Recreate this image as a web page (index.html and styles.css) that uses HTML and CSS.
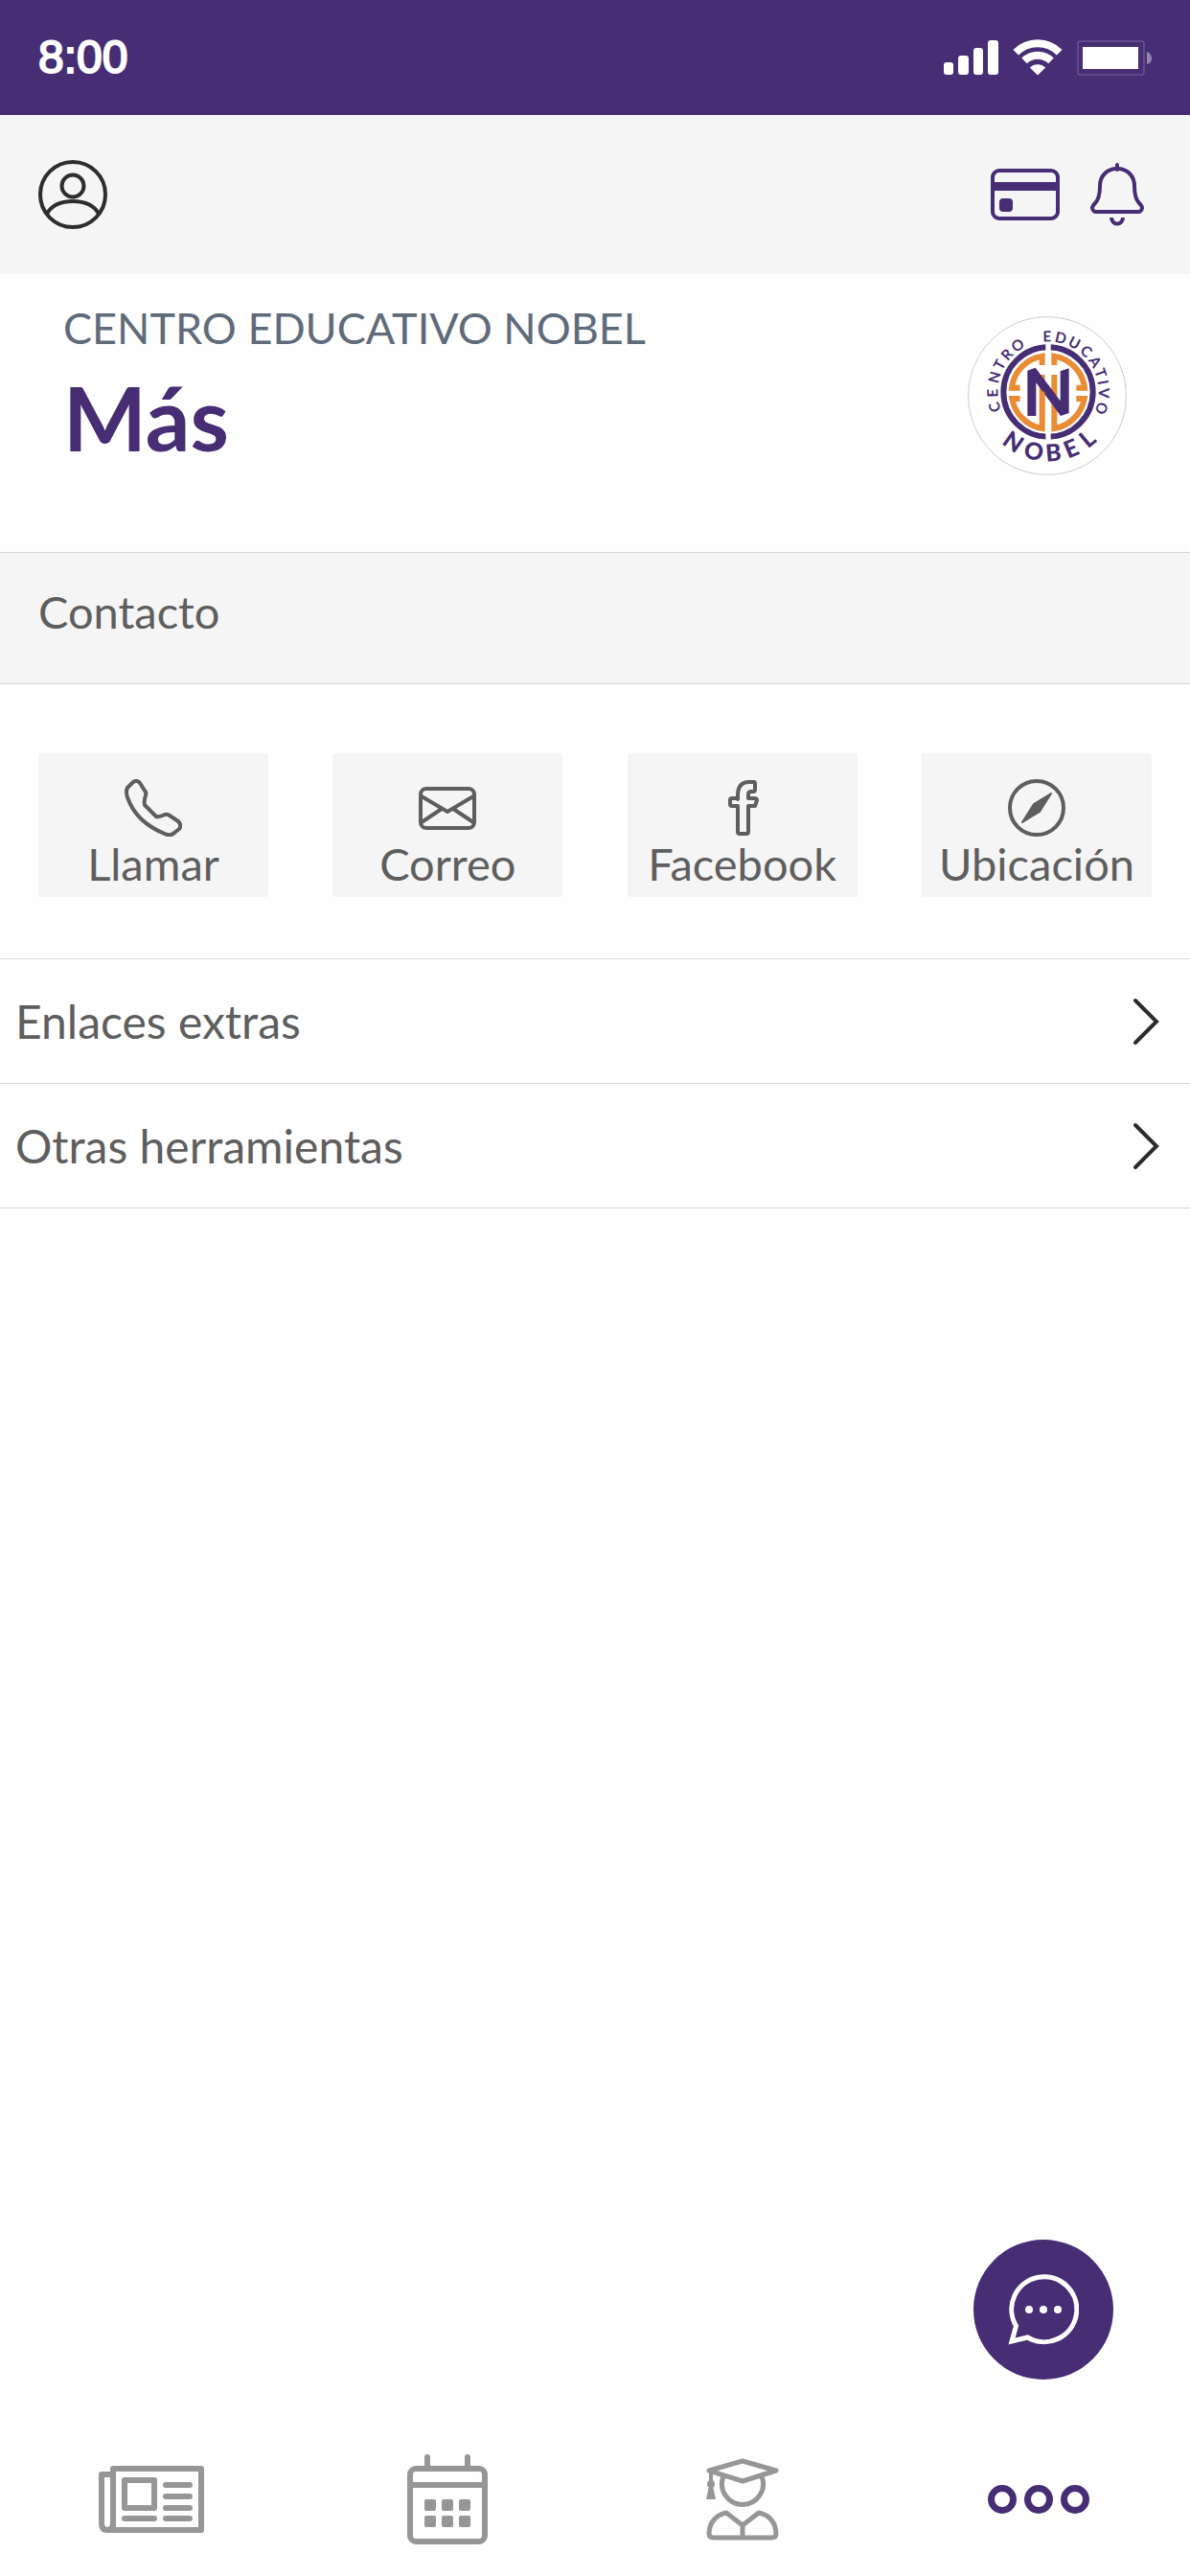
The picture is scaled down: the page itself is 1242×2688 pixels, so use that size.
FILE: index.html
```html
<!DOCTYPE html>
<html lang="es">
<head>
    <meta charset="UTF-8">
    <meta name="viewport" content="width=device-width, initial-scale=1.0">
    <title>Centro Educativo Nobel - Más</title>
    <link rel="stylesheet" href="styles.css">
</head>
<body>
    <div class="status-bar">
        <span class="status-time">8:00</span>
        <div class="status-icons">
            <svg width="57" height="36" viewBox="0 0 57 36" fill="#fff">
                <rect x="0" y="23" width="10" height="13" rx="3"/>
                <rect x="15" y="16" width="11" height="20" rx="3"/>
                <rect x="31" y="8" width="10" height="28" rx="3"/>
                <rect x="46" y="0" width="11" height="36" rx="3"/>
            </svg>
            <svg width="52" height="38" viewBox="0 0 52 38" fill="none" stroke="#fff" stroke-width="8">
                <path d="M3.3 13.8A32 32 0 0 1 48.700 13.800"/>
                <path d="M12 22.400A20 20 0 0 1 40 22.400"/>
                <path d="M26 37.500 17.800 29.600A11.500 11.500 0 0 1 34.200 29.600Z" fill="#fff" stroke="none"/>
            </svg>
            <svg width="78" height="37" viewBox="0 0 78 37">
                <rect x="1" y="1" width="69" height="35" rx="2" fill="none" stroke="#7c69a0"/>
                <rect x="6" y="7" width="58" height="23" fill="#fff"/>
                <path d="M73 12q5 2 5 7t-5 6z" fill="#9486b2"/>
            </svg>
        </div>
    </div>

    <header class="top-bar">
        <button type="button" class="icon-button" aria-label="Perfil">
            <svg width="72" height="72" viewBox="0 0 72 72" fill="none" stroke="#2d2d2d" stroke-width="4">
                <circle cx="36" cy="36" r="34"/>
                <circle cx="36" cy="27" r="11.500"/>
                <path d="M9 56C14 47 24 43 36 43s22 4 27 13"/>
            </svg>
        </button>
        <div class="top-actions">
            <button type="button" class="icon-button" aria-label="Pagos">
                <svg width="72" height="54" viewBox="0 0 72 54" fill="#462d74">
                    <rect x="2" y="2" width="68" height="50" rx="7" fill="none" stroke="#462d74" stroke-width="4"/>
                    <rect x="2" y="14" width="68" height="9"/>
                    <rect x="9" y="31" width="14" height="14" rx="4"/>
                </svg>
            </button>
            <button type="button" class="icon-button" aria-label="Notificaciones">
                <svg width="56" height="66" viewBox="0 0 56 66" fill="none" stroke="#462d74" stroke-width="4">
                    <path d="M28 2v5" stroke-linecap="round"/>
                    <path d="M28 6C17 6 10 14 10 24c0 8-1 14-5 18-2 2-3 3-3 5 0 2 2 4 4 4h44c2 0 4-2 4-4 0-2-1-3-3-5-4-4-5-10-5-18C46 14 39 6 28 6z"/>
                    <path d="M22 57a6 6.500 0 0 0 12 0"/>
                </svg>
            </button>
        </div>
    </header>

    <section class="hero">
        <div>
            <p class="school-name">CENTRO EDUCATIVO NOBEL</p>
            <h1 class="page-title">Más</h1>
        </div>
        <svg class="school-logo" viewBox="58 60 498 498">
            <circle cx="307" cy="309" r="247" fill="#fff" stroke="#ccc" stroke-width="3"/>
            <circle cx="310" cy="297" r="140" fill="none" stroke="#462d74" stroke-width="18"/>
            <g fill="none" stroke="#ea8b35" stroke-width="18">
                <path d="M222 284H196A114 114 0 0 1 291 185V213"/>
                <path d="M222 318H197A114 114 0 0 0 291 411V243"/>
                <path d="M398 284H424A114 114 0 0 0 329 185V213"/>
                <path d="M398 318H423A114 114 0 0 1 329 411V243"/>
            </g>
            <path d="M302 140h16v310h-16z" fill="#fff"/>
            <path d="M245 372V230L270 221L348 325V232L375 223V363L349 372L272 268V372Z" fill="#462d74"/>
            <path d="M283 296h16v100h-16z" fill="#ea8b35"/>
            <g class="logo-text">
                <text x="162.300 152.200 153 165.300 183 207.800" y="355 313.100 272.500 232.100 201.900 175.100" rotate="-106 -91 -75 -61 -48 -33.500">CENTRO</text>
                <text x="293.800 328.700 369.400 406.800 434.200 453.900 464.500 468.300 466.400" y="139.200 139.200 149.700 171.300 197.900 230.400 263.200 284.200 325.900" rotate="-1 13 28 43 57 70 80 91 107">EDUCATIVO</text>
                <text class="logo-name" x="162 230 303.800 372.400 434.900" y="458.300 500.800 515.300 506.100 475.400" rotate="35 13.500 -5 -22.500 -40">NOBEL</text>
            </g>
        </svg>
    </section>

    <h2 class="section-title">Contacto</h2>

    <nav class="contact-list">
        <a href="#" class="contact-item">
            <svg width="60" height="60" viewBox="0 0 60 60" fill="none" stroke="#5e5e5e" stroke-width="4" stroke-linejoin="round">
                <path d="M8 4Q12 0 16 4L21 12Q23 14 22 17Q20 23 21 27L33 39Q36 40 42 37Q45 36 47 38L56 44Q60 48 57 52L52 56Q48 60 42 57Q12 45 3 19Q1 13 3 9Z"/>
            </svg>
            <span>Llamar</span>
        </a>
        <a href="#" class="contact-item">
            <svg width="60" height="60" viewBox="0 0 60 60" fill="none" stroke="#5e5e5e" stroke-width="4">
                <rect x="2" y="10" width="56" height="41" rx="6"/>
                <path d="M3 18L30 34L57 18M3 45L24 31M57 45L36 31"/>
            </svg>
            <span>Correo</span>
        </a>
        <a href="#" class="contact-item">
            <svg width="60" height="60" viewBox="0 0 60 60" fill="none" stroke="#5e5e5e" stroke-width="4" stroke-linejoin="round">
                <path d="M25 21V17C25 8 29 3 37 3H42Q43 3 43 5V11Q43 13 41 13H39Q36 13 36 16V20H42Q45 20 45 22L43 28H36V55Q36 57 34 57H27Q25 57 25 55V28H19Q17 28 17 26V22Q17 20 19 20H25Z"/>
            </svg>
            <span>Facebook</span>
        </a>
        <a href="#" class="contact-item">
            <svg width="60" height="60" viewBox="0 0 60 60" fill="none" stroke="#5e5e5e" stroke-width="4">
                <circle cx="30" cy="30" r="28"/>
                <path d="M45 15L33 34L15 45L27 26Z" fill="#5e5e5e" stroke-width="2" stroke-linejoin="round"/>
            </svg>
            <span>Ubicación</span>
        </a>
    </nav>

    <nav class="options">
        <a href="#" class="option-row">
            <span>Enlaces extras</span>
            <svg width="28" height="50" viewBox="0 0 28 50" fill="none" stroke="#2b2b2b" stroke-width="4" stroke-linecap="round">
                <path d="M3 3L25 25L3 47"/>
            </svg>
        </a>
        <a href="#" class="option-row">
            <span>Otras herramientas</span>
            <svg width="28" height="50" viewBox="0 0 28 50" fill="none" stroke="#2b2b2b" stroke-width="4" stroke-linecap="round">
                <path d="M3 3L25 25L3 47"/>
            </svg>
        </a>
    </nav>

    <button type="button" class="chat-button" aria-label="Chat">
        <svg width="74" height="74" viewBox="0 0 74 74" fill="none" stroke="#fff" stroke-width="5">
            <path d="M8.500 54A34 34 0 1 1 20.500 66L4 70Z"/>
            <g fill="#fff" stroke="none">
                <circle cx="22" cy="37" r="4"/>
                <circle cx="37" cy="37" r="4"/>
                <circle cx="52" cy="37" r="4"/>
            </g>
        </svg>
    </button>

    <nav class="tab-bar">
        <a href="#" class="tab" aria-label="Noticias">
            <svg width="110" height="70" viewBox="0 0 110 70" fill="none" stroke="#969696" stroke-width="6" stroke-linecap="round" stroke-linejoin="round">
                <path d="M15 63V3H107V67H9Q3 67 3 60V9H13M15 60Q15 67 9 67"/>
                <rect x="27" y="15" width="31" height="29"/>
                <path d="M27 55H58M70 20H95M70 32H95M70 44H95M70 55H95"/>
            </svg>
        </a>
        <a href="#" class="tab" aria-label="Calendario">
            <svg width="84" height="94" viewBox="0 0 84 94" fill="none" stroke="#969696" stroke-width="6">
                <rect x="3" y="15" width="78" height="76" rx="6"/>
                <path d="M3 32H81"/>
                <path d="M21 13V3M63 13V3" stroke-linecap="round"/>
                <g fill="#969696" stroke="none">
                    <rect x="18" y="47" width="12" height="12" rx="2"/>
                    <rect x="36" y="47" width="12" height="12" rx="2"/>
                    <rect x="54" y="47" width="12" height="12" rx="2"/>
                    <rect x="18" y="64" width="12" height="12" rx="2"/>
                    <rect x="36" y="64" width="12" height="12" rx="2"/>
                    <rect x="54" y="64" width="12" height="12" rx="2"/>
                </g>
            </svg>
        </a>
        <a href="#" class="tab" aria-label="Alumnos">
            <svg width="76" height="86" viewBox="0 0 76 86" fill="none" stroke="#969696" stroke-width="5" stroke-linejoin="round">
                <path d="M3 13L38 3L73 13L38 24Z"/>
                <path d="M18 19A21.500 21.500 0 1 0 58 19"/>
                <path d="M5 14V26" stroke-width="4"/>
                <circle cx="5" cy="27" r="4" fill="#969696" stroke="none"/>
                <path d="M3 29H7L10 43H0Z" fill="#969696" stroke="none"/>
                <path d="M38 83V70L21 57C10 59 3 68 3 79Q3 83 8 83H68Q73 83 73 79C73 68 66 59 55 57L38 70"/>
            </svg>
        </a>
        <a href="#" class="tab" aria-label="Más">
            <svg width="106" height="30" viewBox="0 0 106 30" fill="none" stroke="#462d74" stroke-width="7">
                <circle cx="15" cy="15" r="11.500"/>
                <circle cx="53" cy="15" r="11.500"/>
                <circle cx="91" cy="15" r="11.500"/>
            </svg>
        </a>
    </nav>
</body>
</html>
```

FILE: styles.css
```css
* {
    box-sizing: border-box;
}
body {
    font-family: Lato, sans-serif;
    font-size: 47px;
    line-height: 56px;
    color: #5e5e5e;
    margin: 0;
    background-color: #fefefe;
    min-height: 100vh;
    display: flex;
    flex-direction: column;
}
svg {
    display: block;
    flex-shrink: 0;
}
a {
    color: inherit;
    text-decoration: none;
}
.status-bar {
    display: flex;
    align-items: center;
    justify-content: space-between;
    height: 120px;
    padding: 0 40px;
    background-color: #462d74;
}
.status-time {
    font-family: "Liberation Sans", sans-serif;
    font-size: 48px;
    color: white;
    -webkit-text-stroke: 2px white;
}
.status-icons {
    display: flex;
    align-items: center;
    gap: 15px;
}
.top-bar {
    display: flex;
    align-items: center;
    justify-content: space-between;
    height: 166px;
    padding: 0 48px 0 40px;
    background-color: #f5f5f5;
}
.top-actions {
    display: flex;
    align-items: center;
    gap: 32px;
}
.icon-button {
    padding: 0;
    border: none;
    background: none;
    cursor: pointer;
}
.hero {
    display: flex;
    align-items: flex-start;
    justify-content: space-between;
    height: 290px;
    padding: 28px 66px 0;
}
.school-name {
    margin: 0 0 12px;
    font-size: 45px;
    color: #5f6b7a;
}
.page-title {
    margin: 0;
    font-size: 92px;
    line-height: 108px;
    color: #462d74;
}
.school-logo {
    width: 166px;
    height: 166px;
    margin-top: 16px;
}
.logo-text {
    font-size: 46px;
    font-weight: bold;
    fill: #462d74;
}
.logo-name {
    font-size: 74px;
    font-weight: 900;
}
.section-title {
    margin: 0;
    padding: 33px 40px 47px;
    border-top: 1px solid #d8d8d8;
    border-bottom: 1px solid #d8d8d8;
    background-color: #f5f5f5;
    font-size: 47px;
    font-weight: normal;
}
.contact-list {
    display: flex;
    justify-content: space-between;
    padding: 72px 40px 64px;
}
.contact-item {
    display: flex;
    flex-direction: column;
    align-items: center;
    width: 240px;
    padding: 27px 0 7px;
    border-radius: 2px;
    background-color: #f5f5f5;
}
.options {
    border-bottom: 1px solid #d8d8d8;
    font-size: 48px;
}
.option-row {
    display: flex;
    align-items: center;
    justify-content: space-between;
    padding: 37px 32px 36px 16px;
    border-top: 1px solid #d8d8d8;
}
.chat-button {
    position: fixed;
    right: 80px;
    bottom: 205px;
    display: flex;
    align-items: center;
    justify-content: center;
    width: 146px;
    height: 146px;
    padding: 0;
    border: none;
    border-radius: 50%;
    background-color: #462d74;
    cursor: pointer;
}
.tab-bar {
    display: flex;
    align-items: center;
    height: 160px;
    margin-top: auto;
    padding: 0 4px;
}
.tab {
    flex: 1;
    display: flex;
    justify-content: center;
}
```
